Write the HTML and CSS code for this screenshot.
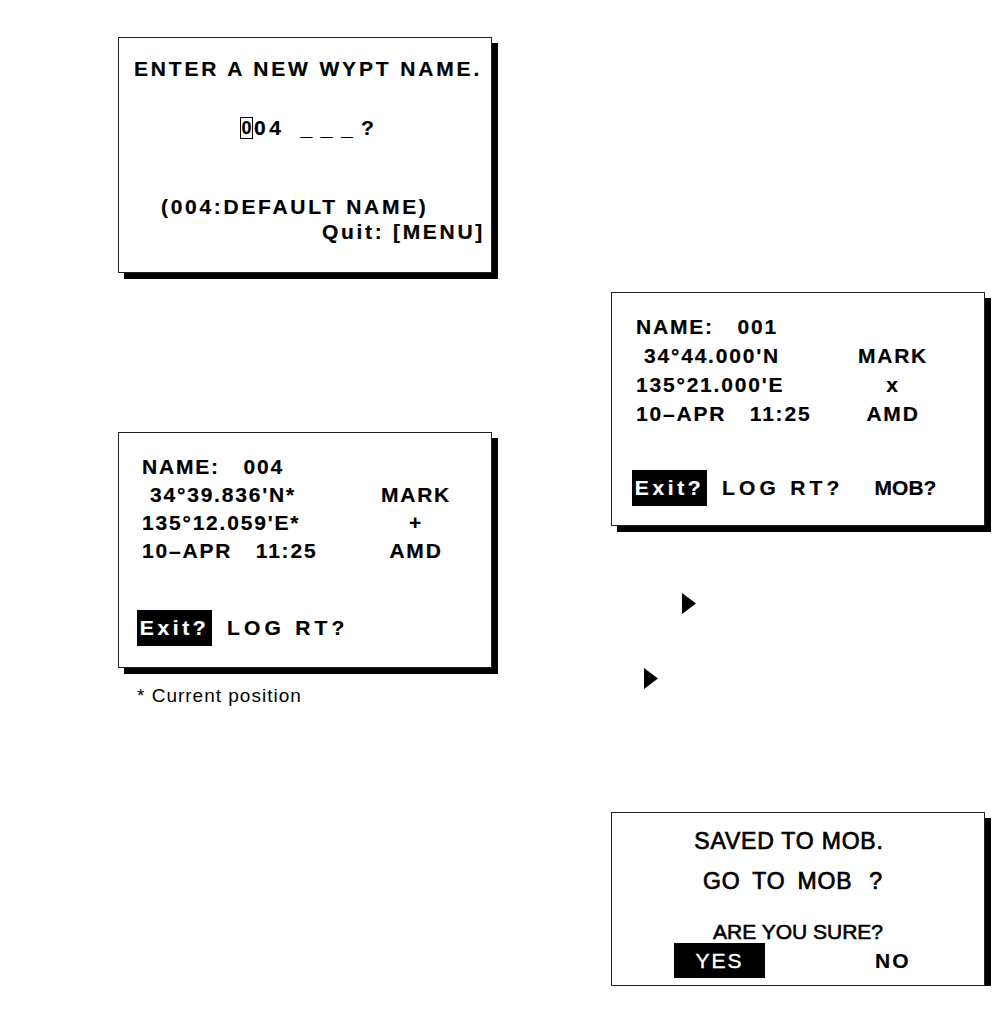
FILE: index.html
```html
<!DOCTYPE html>
<html lang="en">
<head>
  <meta charset="UTF-8" />
  <title>Waypoint and MOB screens</title>
  <link rel="stylesheet" href="styles.css">
</head>
<body>

<div class="page">
  <div class="col">
    <div class="screen screen-name">
      <div class="heading">ENTER A NEW WYPT NAME.</div>
      <div class="entry">
        <span class="cursor">0</span><span class="digits">04</span><span class="blanks">___</span><span>?</span>
      </div>
      <div class="default">(004:DEFAULT NAME)</div>
      <div class="quit">Quit: [MENU]</div>
    </div>

    <div class="screen screen-wpt">
      <div class="row"><span class="wide">NAME: 004</span></div>
      <div class="row"><span class="indent">34°39.836'N*</span><span class="mark">MARK</span></div>
      <div class="row"><span>135°12.059'E*</span><span class="mark">+</span></div>
      <div class="row"><span class="wide">10–APR 11:25</span><span class="mark">AMD</span></div>
      <div class="menu">
        <span class="hl">Exit?</span>
        <span class="menu-item">LOG RT?</span>
      </div>
    </div>
    <div class="caption">* Current position</div>
  </div>

  <div class="col">
    <div class="screen screen-saved">
      <div class="row"><span class="wide">NAME: 001</span></div>
      <div class="row"><span class="indent">34°44.000'N</span><span class="mark">MARK</span></div>
      <div class="row"><span>135°21.000'E</span><span class="mark">x</span></div>
      <div class="row"><span class="wide">10–APR 11:25</span><span class="mark">AMD</span></div>
      <div class="menu">
        <span class="hl">Exit?</span>
        <span class="menu-item">LOG RT?</span>
        <span class="menu-item mob">MOB?</span>
      </div>
    </div>

    <!-- key press arrows -->
    <svg class="arrow arrow-a" width="14" height="21" viewBox="0 0 14 21"><polygon points="0,0 14,10.5 0,21" fill="#000"/></svg>
    <svg class="arrow arrow-b" width="14" height="21" viewBox="0 0 14 21"><polygon points="0,0 14,10.5 0,21" fill="#000"/></svg>

    <div class="screen screen-confirm">
      <div class="prompt">SAVED TO MOB.</div>
      <div class="prompt prompt-second">GO TO MOB<span class="ask">?</span></div>
      <div class="sure">ARE YOU SURE?</div>
      <div class="answers">
        <span class="yes">YES</span>
        <span class="no">NO</span>
      </div>
    </div>
  </div>
</div>

</body>
</html>
```

FILE: styles.css
```css
body {
  margin: 0;
  background-color: #fff;
  color: #000;
  font-family: "Liberation Sans", Arial, sans-serif;
}

.page {
  display: flex;
  gap: 119px;
  padding-left: 118px;
}

.col {
  display: flex;
  flex-direction: column;
  align-items: flex-start;
  width: 374px;
}

.screen {
  box-sizing: border-box;
  width: 374px;
  border: 1px solid #222;
  box-shadow: 6px 6px 0 #000;
  background-color: #fff;
  font-size: 21px;
  font-weight: bold;
  letter-spacing: 1.8px;
  -webkit-text-stroke: 0.2px currentColor;
}

/* name entry screen */
.screen-name {
  margin-top: 37px;
  height: 236px;
  padding-top: 17px;
  letter-spacing: 2.7px;
}

.heading {
  line-height: 28px;
  text-align: center;
  padding-left: 6px;
  letter-spacing: 2.85px;
}

.entry {
  display: flex;
  align-items: center;
  height: 28px;
  line-height: 28px;
  margin: 31px 0 0 121px;
}

.cursor {
  box-sizing: border-box;
  width: 13px;
  height: 22px;
  border: 1px solid #000;
  font-size: 18px;
  line-height: 20px;
  letter-spacing: 0;
  text-align: center;
}

.digits { margin-left: 1px; letter-spacing: 3.6px; }
.blanks { margin-left: 16px; letter-spacing: 8.5px; }

.default {
  margin-top: 52px;
  padding-left: 42px;
  line-height: 25px;
}

.quit {
  line-height: 25px;
  text-align: right;
  padding-right: 6px;
}

/* waypoint data screens */
.screen-wpt {
  margin-top: 159px;
  height: 236px;
  padding: 20px 0 0 23px;
}

.screen-saved {
  margin-top: 292px;
  height: 234px;
  padding: 19px 0 0 24px;
}

.row {
  display: grid;
  grid-template-columns: 224px 100px;
  line-height: 28px;
  white-space: nowrap;
}

.screen-saved .row {
  grid-template-columns: 207px 100px;
  line-height: 29px;
}

.mark { text-align: center; }
.indent { padding-left: 8px; }
.wide { word-spacing: 16px; }

.menu {
  display: flex;
  align-items: center;
  margin: 45px 0 0 -5px;
}

.screen-saved .menu {
  margin: 42px 0 0 -4px;
}

.hl {
  width: 75px;
  height: 36px;
  line-height: 36px;
  background-color: #000;
  color: #fff;
  text-align: center;
  letter-spacing: 3.6px;
}

.menu-item {
  margin-left: 15px;
  letter-spacing: 4.2px;
}

.menu-item.mob {
  margin-left: 31px;
  letter-spacing: 0;
}

.caption {
  margin: 17px 0 0 19px;
  font-size: 19px;
  line-height: 22px;
  letter-spacing: 1px;
}

.arrow { display: block; }
.arrow-a { margin: 67px 0 0 71px; }
.arrow-b { margin: 54px 0 0 33px; }

/* MOB confirm screen */
.screen-confirm {
  margin-top: 123px;
  height: 174px;
  padding-top: 13px;
  font-weight: normal;
  letter-spacing: 0.8px;
}

.prompt {
  font-size: 23px;
  line-height: 30px;
  text-align: center;
  padding-right: 18px;
  -webkit-text-stroke: 0.7px #000;
}

.prompt-second {
  margin-top: 10px;
  padding-right: 10px;
  word-spacing: 5px;
}

.ask { margin-left: 17px; }

.sure {
  margin-top: 25px;
  font-size: 21px;
  line-height: 22px;
  letter-spacing: 0;
  text-align: center;
  -webkit-text-stroke: 0.6px #000;
}

.answers {
  display: flex;
  align-items: center;
  font-size: 21px;
  letter-spacing: 2px;
}

.yes {
  width: 91px;
  height: 35px;
  line-height: 35px;
  margin-left: 62px;
  background-color: #000;
  color: #fff;
  text-align: center;
  -webkit-text-stroke: 0.4px #fff;
}

.no {
  margin-left: 110px;
  font-weight: bold;
}
```
